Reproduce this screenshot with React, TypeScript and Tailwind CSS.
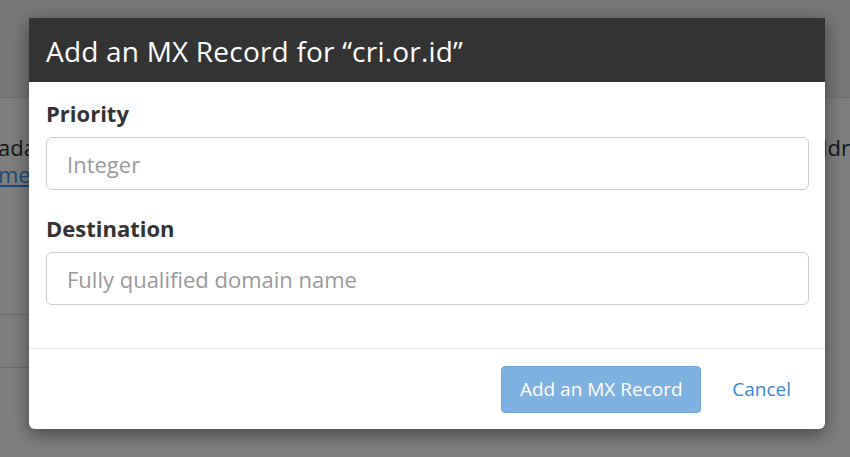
export default function App() {
  return (
    <div
      className="relative w-[850px] h-[457px] overflow-hidden bg-[#7e7e7e]"
      style={{ fontFamily: '"Open Sans", "Liberation Sans", sans-serif' }}
    >
      {/* page behind the overlay */}
      <div className="flex flex-col h-full">
        <div className="h-[98px] bg-[#777777] border-b border-[#6e6e6e]"></div>
        <div className="flex justify-between pt-[36px] text-[22px] leading-[27px] text-[#151515]">
          <div className="-ml-[2px]">
            <div>ada</div>
            <div className="text-[#1d4a78] underline">me</div>
          </div>
          <div>addr</div>
        </div>
        <div className="mt-[126px] w-[400px] h-px bg-[#6c6c6c]"></div>
        <div className="mt-[52px] w-[400px] h-px bg-[#6c6c6c]"></div>
      </div>

      {/* modal */}
      <div className="absolute left-[29px] top-[18px] w-[796px] bg-white rounded-b-[6px] shadow-[0_5px_18px_rgba(0,0,0,0.45)] overflow-hidden">
        <div className="h-[64px] bg-[#333333] px-[17px] flex items-center pt-[2px]">
          <h1 className="text-[28px] text-white font-normal tracking-[0.2px]">
            Add an MX Record for “cri.or.id”
          </h1>
        </div>
        <div className="px-[17px] pt-[17px] pb-[43px]">
          <label className="block text-[22px] font-bold text-[#333333] leading-[29px]">Priority</label>
          <input
            className="mt-[9px] block w-[763px] h-[53px] border border-[#cccccc] rounded-[6px] px-[20px] text-[22px] placeholder-[#999999] outline-none"
            placeholder="Integer"
          />
          <label className="block mt-[24px] text-[22px] font-bold text-[#333333] leading-[29px]">Destination</label>
          <input
            className="mt-[9px] block w-[763px] h-[53px] border border-[#cccccc] rounded-[6px] px-[20px] text-[22px] placeholder-[#999999] outline-none"
            placeholder="Fully qualified domain name"
          />
        </div>
        <div className="border-t border-[#e5e5e5] h-[81px] flex items-center justify-end pr-[34px] gap-[31px]">
          <button className="w-[200px] h-[47px] bg-[#7fb1e0] border border-[#6fa3d6] rounded-[4px] text-white text-[19px]">
            Add an MX Record
          </button>
          <span className="text-[19px] text-[#3a87cf]">Cancel</span>
        </div>
      </div>
    </div>
  );
}
